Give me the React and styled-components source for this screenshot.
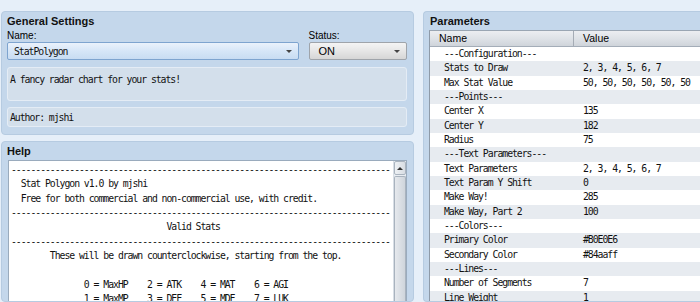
import React from "react";
import styled, { createGlobalStyle } from "styled-components";

const Global = createGlobalStyle`
  html, body {
    margin: 0;
    padding: 0;
    background: #e6eff9;
    overflow: hidden;
  }
  body {
    font-family: "Liberation Sans", Arial, sans-serif;
    color: #111;
  }
`;

const mono = `
  font-family: "DejaVu Sans Mono", "Liberation Mono", monospace;
  font-size: 9.8px;
  letter-spacing: -1.04px;
`;

const Page = styled.div`
  display: flex;
  gap: 9px;
  padding: 11px 0 0 1px;
  height: 302px;
  box-sizing: border-box;
  width: 720px;
`;

const LeftColumn = styled.div`
  width: 413px;
  display: flex;
  flex-direction: column;
  gap: 6px;
  flex-shrink: 0;
`;

const Panel = styled.section`
  background: #c4d7eb;
  border: 1px solid #b6cbe1;
  border-radius: 4px;
  box-sizing: border-box;
  padding: ${(p) => p.$pad || "0 6px 6px 4px"};
  display: flex;
  flex-direction: column;
  flex: ${(p) => (p.$grow ? 1 : "none")};
  min-height: 0;
  overflow: hidden;
`;

const PanelTitle = styled.h2`
  margin: 0;
  font-size: 11px;
  font-weight: bold;
  line-height: 15px;
  padding: 2px 0 0 1px;
  color: #111;
`;

const FieldRow = styled.div`
  display: flex;
  gap: 9px;
`;

const Field = styled.div`
  display: flex;
  flex-direction: column;
  width: ${(p) => p.$w}px;
  padding-left: 1px;
`;

const Label = styled.label`
  font-size: 10px;
  line-height: 13px;
  color: #000;
`;

const Select = styled.div`
  height: 18px;
  box-sizing: border-box;
  border: 1px solid ${(p) => (p.$focus ? "#7ea4cf" : "#9fa4aa")};
  border-radius: 2px;
  background: ${(p) =>
    p.$focus
      ? "linear-gradient(#eaf2fb, #d6e6f7 50%, #c8dcf2)"
      : "linear-gradient(#f4f4f4, #e6e6e6 50%, #d6d6d6)"};
  display: flex;
  align-items: center;
  padding: 0 6px 0 ${(p) => (p.$focus ? 6 : 9)}px;
  position: relative;
`;

const SelectText = styled.span`
  flex: 1;
  ${(p) => (p.$mono ? mono : "font-size: 11px; color: #000;")}
`;

const Arrow = styled.span`
  width: 0;
  height: 0;
  border-left: 3px solid transparent;
  border-right: 3px solid transparent;
  border-top: 3px solid #444;
  margin-top: 1px;
`;

const InfoBox = styled.div`
  margin-top: ${(p) => p.$mt}px;
  height: ${(p) => p.$h}px;
  box-sizing: border-box;
  background: #d3dfeb;
  border: 1px solid #e4ecf5;
  border-radius: 3px;
  padding: ${(p) => p.$pt}px 2px 0;
  margin-left: 1px;
  line-height: 13px;
  ${mono}
`;

const HelpBox = styled.div`
  margin: 1px 0 0 2px;
  flex: 1;
  display: flex;
  background: #fff;
  border: 1px solid #9aabbd;
  border-bottom: none;
  min-height: 0;
  overflow: hidden;
`;

const HelpText = styled.pre`
  margin: 0;
  flex: 1;
  padding: 2px 0 0 2px;
  line-height: 14.33px;
  white-space: pre;
  overflow: hidden;
  color: #111;
  ${mono}
`;

const ScrollBar = styled.div`
  width: 12px;
  display: flex;
  flex-direction: column;
  background: #e9edf2;
  border-left: 1px solid #d8dee5;
`;

const ScrollButton = styled.div`
  height: 14px;
  box-sizing: border-box;
  border: 1px solid #aab4bf;
  border-radius: 2px;
  background: linear-gradient(90deg, #eef1f4, #d8dde3);
  display: flex;
  align-items: center;
  justify-content: center;
  &::after {
    content: "";
    border-left: 3px solid transparent;
    border-right: 3px solid transparent;
    border-bottom: 3px solid #333;
  }
`;

const ScrollThumb = styled.div`
  flex: 1;
  margin-top: 1px;
  border: 1px solid #a9b3be;
  border-bottom: none;
  border-radius: 2px 2px 0 0;
  background: linear-gradient(90deg, #e6e9ed, #cfd5dc);
`;

const RightPanel = styled(Panel)`
  width: 290px;
  flex-shrink: 0;
  padding: 0 0 0 5px;
  border-right: none;
`;

const Table = styled.div`
  margin-top: 1px;
  flex: 1;
  background: #fff;
  border-left: 1px solid #8e9aa8;
  border-top: 1px solid #9aa6b3;
  overflow: hidden;
`;

const HeaderRow = styled.div`
  display: grid;
  grid-template-columns: 144px 1fr;
  height: 15px;
  background: linear-gradient(#eceef1, #dde1e6 55%, #cfd4da);
  border-bottom: 1px solid #a4adb8;
  font-size: 10.5px;
  line-height: 15px;
  color: #000;
`;

const HeaderCell = styled.div`
  padding-left: ${(p) => p.$pl}px;
  border-right: ${(p) => (p.$divider ? "1px solid #a5acb5" : "none")};
`;

const Row = styled.div`
  display: grid;
  grid-template-columns: 144px 1fr;
  height: 14.33px;
  line-height: 14.33px;
  background: ${(p) => (p.$odd ? "#e7ebf0" : "#fff")};
  ${mono}
`;

const Cell = styled.div`
  padding-left: ${(p) => p.$pl}px;
  white-space: pre;
  overflow: hidden;
`;

const dashes = "-".repeat(78);
const helpLines = [
  dashes,
  "  Stat Polygon v1.0 by mjshi",
  "  Free for both commercial and non-commercial use, with credit.",
  dashes,
  " ".repeat(32) + "Valid Stats",
  dashes,
  " ".repeat(8) + "These will be drawn counterclockwise, starting from the top.",
  "",
  " ".repeat(15) + "0 = MaxHP    2 = ATK    4 = MAT    6 = AGI",
  " ".repeat(15) + "1 = MaxMP    3 = DEF    5 = MDF    7 = LUK",
];

const params = [
  ["---Configuration---", ""],
  ["Stats to Draw", "2, 3, 4, 5, 6, 7"],
  ["Max Stat Value", "50, 50, 50, 50, 50, 50"],
  ["---Points---", ""],
  ["Center X", "135"],
  ["Center Y", "182"],
  ["Radius", "75"],
  ["---Text Parameters---", ""],
  ["Text Parameters", "2, 3, 4, 5, 6, 7"],
  ["Text Param Y Shift", "0"],
  ["Make Way!", "285"],
  ["Make Way, Part 2", "100"],
  ["---Colors---", ""],
  ["Primary Color", "#B0E0E6"],
  ["Secondary Color", "#84aaff"],
  ["---Lines---", ""],
  ["Number of Segments", "7"],
  ["Line Weight", "1"],
];

const App = () => {
  return (
    <>
      <Global />
      <Page>
        <LeftColumn>
          <Panel style={{ height: 124 }}>
            <PanelTitle>General Settings</PanelTitle>
            <FieldRow>
              <Field $w={293}>
                <Label>Name:</Label>
                <Select $focus>
                  <SelectText $mono>StatPolygon</SelectText>
                  <Arrow />
                </Select>
              </Field>
              <Field $w={99}>
                <Label>Status:</Label>
                <Select>
                  <SelectText>ON</SelectText>
                  <Arrow />
                </Select>
              </Field>
            </FieldRow>
            <InfoBox $mt={7} $h={34} $pt={5}>
              A fancy radar chart for your stats!
            </InfoBox>
            <InfoBox $mt={6} $h={20} $pt={3}>
              Author: mjshi
            </InfoBox>
          </Panel>
          <Panel $grow $pad="0 6px 0 4px">
            <PanelTitle>Help</PanelTitle>
            <HelpBox>
              <HelpText>{helpLines.join("\n")}</HelpText>
              <ScrollBar>
                <ScrollButton />
                <ScrollThumb />
              </ScrollBar>
            </HelpBox>
          </Panel>
        </LeftColumn>
        <RightPanel>
          <PanelTitle>Parameters</PanelTitle>
          <Table>
            <HeaderRow>
              <HeaderCell $pl={9} $divider>
                Name
              </HeaderCell>
              <HeaderCell $pl={9}>Value</HeaderCell>
            </HeaderRow>
            {params.map(([name, value], i) => (
              <Row key={name + i} $odd={i % 2 === 1}>
                <Cell $pl={14}>{name}</Cell>
                <Cell $pl={9}>{value}</Cell>
              </Row>
            ))}
          </Table>
        </RightPanel>
      </Page>
    </>
  );
};

export default App;
